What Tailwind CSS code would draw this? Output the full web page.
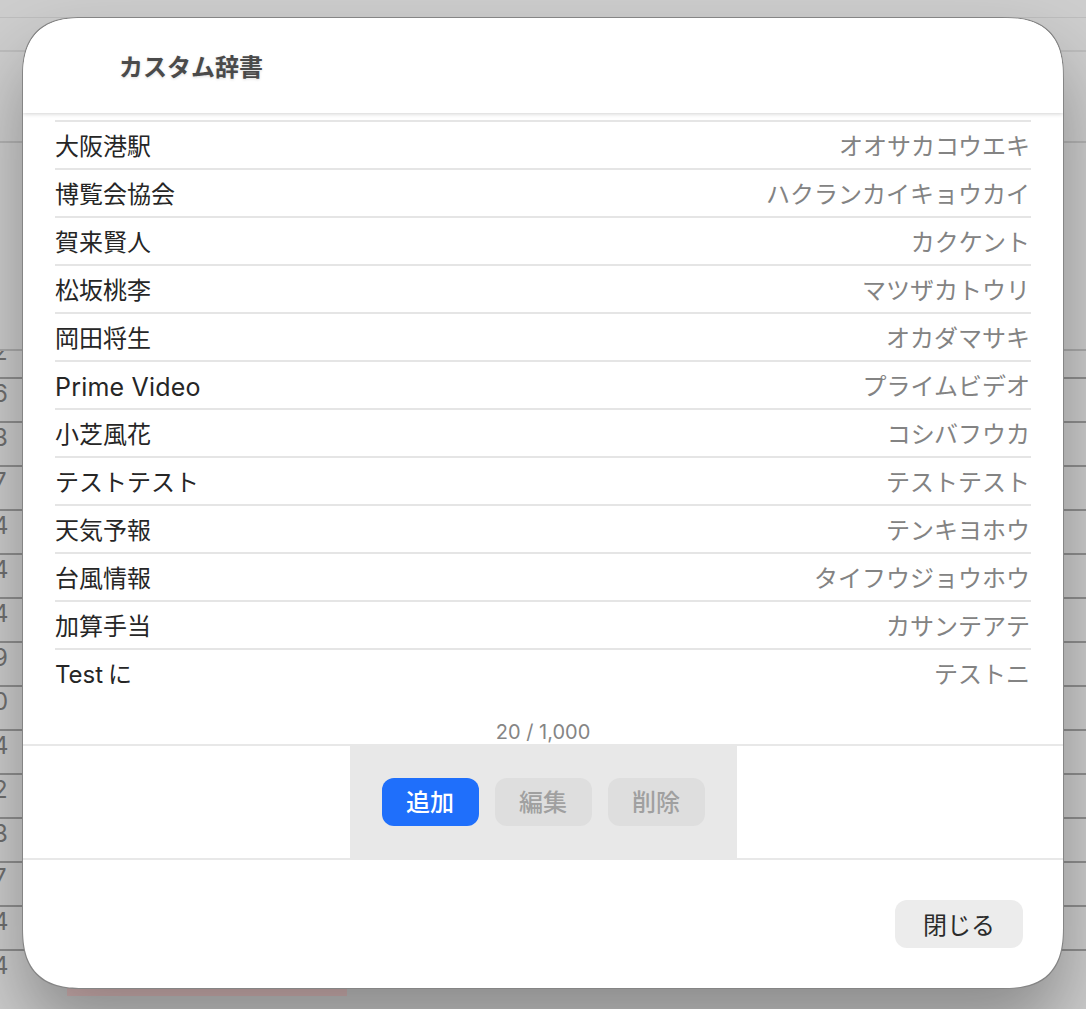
<!DOCTYPE html>
<html lang="ja">
<head>
  <meta charset="UTF-8" />
  <title>カスタム辞書</title>
  <script src="https://cdn.jsdelivr.net/npm/@tailwindcss/browser@4"></script>
</head>
<body class="relative w-[1086px] h-[1009px] overflow-hidden bg-[#cdcdcd] font-['Inter','Noto_Sans_CJK_JP',sans-serif]">
  <!-- page behind the dialog -->
  <div class="flex flex-col text-[24px] leading-[30px] text-[#707070]">
    <div class="h-[18px] border-b border-[#bdbdbd]"></div>
    <div class="h-[34px] border-b-2 border-[#bdbdbd]"></div>
    <div class="h-[91px] border-b-2 border-[#b4b4b4]"></div>
    <div class="h-[208px] border-b-2 border-[#ababab]"></div>
    <div class="h-[28px] border-b-2 border-[#8f8f8f] overflow-hidden"><div class="-ml-[7px] -mt-[14px]">2</div></div>
    <div class="h-[44px] border-b-2 border-[#8f8f8f] -ml-[7px]">6</div>
    <div class="h-[44px] border-b-2 border-[#8f8f8f] -ml-[7px]">8</div>
    <div class="h-[44px] border-b-2 border-[#8f8f8f] -ml-[7px]">7</div>
    <div class="h-[44px] border-b-2 border-[#8f8f8f] -ml-[7px]">4</div>
    <div class="h-[44px] border-b-2 border-[#8f8f8f] -ml-[7px]">4</div>
    <div class="h-[44px] border-b-2 border-[#8f8f8f] -ml-[7px]">4</div>
    <div class="h-[44px] border-b-2 border-[#8f8f8f] -ml-[7px]">9</div>
    <div class="h-[44px] border-b-2 border-[#8f8f8f] -ml-[7px]">0</div>
    <div class="h-[44px] border-b-2 border-[#8f8f8f] -ml-[7px]">4</div>
    <div class="h-[44px] border-b-2 border-[#8f8f8f] -ml-[7px]">2</div>
    <div class="h-[44px] border-b-2 border-[#8f8f8f] -ml-[7px]">8</div>
    <div class="h-[44px] border-b-2 border-[#8f8f8f] -ml-[7px]">7</div>
    <div class="h-[44px] border-b-2 border-[#8f8f8f] -ml-[7px]">4</div>
    <div class="h-[44px] -ml-[7px]">4</div>
  </div>
  <div class="absolute left-[67px] top-[960px] w-[280px] h-[36px] bg-[#dcbcbc]"></div>

  <!-- dialog -->
  <div class="absolute left-[23px] top-[18px] w-[1040px] h-[970px] flex flex-col bg-white rounded-[62px] [corner-shape:superellipse(1.4)] overflow-hidden shadow-[0_0_0_1px_#858585,0_40px_70px_rgba(0,0,0,0.32)]">
    <header class="relative z-10 h-[95px] shrink-0 flex items-center pl-[96px] pt-[4px] bg-white shadow-[0_1px_4px_rgba(0,0,0,0.18)]">
      <h1 class="text-[24px] font-bold text-[#4a4a4a] [text-shadow:0_1px_3px_rgba(0,0,0,0.14)]">カスタム辞書</h1>
    </header>

    <div class="px-[32px] pt-[7px] h-[631px] shrink-0 text-[24px] leading-[44px]">
      <ul class="border-t-2 border-[#e5e5e5]">
        <li class="h-[48px] pt-[3px] flex justify-between border-b-2 border-[#e5e5e5]"><span class="text-[#262626]">大阪港駅</span><span class="pr-px text-[#838383]">オオサカコウエキ</span></li>
        <li class="h-[48px] pt-[3px] flex justify-between border-b-2 border-[#e5e5e5]"><span class="text-[#262626]">博覧会協会</span><span class="pr-px text-[#838383]">ハクランカイキョウカイ</span></li>
        <li class="h-[48px] pt-[3px] flex justify-between border-b-2 border-[#e5e5e5]"><span class="text-[#262626]">賀来賢人</span><span class="pr-px text-[#838383]">カクケント</span></li>
        <li class="h-[48px] pt-[3px] flex justify-between border-b-2 border-[#e5e5e5]"><span class="text-[#262626]">松坂桃李</span><span class="pr-px text-[#838383]">マツザカトウリ</span></li>
        <li class="h-[48px] pt-[3px] flex justify-between border-b-2 border-[#e5e5e5]"><span class="text-[#262626]">岡田将生</span><span class="pr-px text-[#838383]">オカダマサキ</span></li>
        <li class="h-[48px] pt-[3px] flex justify-between border-b-2 border-[#e5e5e5]"><span class="text-[#262626] text-[25px] tracking-[0.2px]">Prime Video</span><span class="pr-px text-[#838383]">プライムビデオ</span></li>
        <li class="h-[48px] pt-[3px] flex justify-between border-b-2 border-[#e5e5e5]"><span class="text-[#262626]">小芝風花</span><span class="pr-px text-[#838383]">コシバフウカ</span></li>
        <li class="h-[48px] pt-[3px] flex justify-between border-b-2 border-[#e5e5e5]"><span class="text-[#262626]">テストテスト</span><span class="pr-px text-[#838383]">テストテスト</span></li>
        <li class="h-[48px] pt-[3px] flex justify-between border-b-2 border-[#e5e5e5]"><span class="text-[#262626]">天気予報</span><span class="pr-px text-[#838383]">テンキヨホウ</span></li>
        <li class="h-[48px] pt-[3px] flex justify-between border-b-2 border-[#e5e5e5]"><span class="text-[#262626]">台風情報</span><span class="pr-px text-[#838383]">タイフウジョウホウ</span></li>
        <li class="h-[48px] pt-[3px] flex justify-between border-b-2 border-[#e5e5e5]"><span class="text-[#262626]">加算手当</span><span class="pr-px text-[#838383]">カサンテアテ</span></li>
        <li class="h-[48px] pt-[3px] flex justify-between"><span class="text-[#262626] [word-spacing:-2px]">Test に</span><span class="pr-px text-[#838383]">テストニ</span></li>
      </ul>
      <p class="mt-[20px] text-center text-[20px] leading-[28px] text-[#858585]">20 / 1,000</p>
    </div>

    <div class="h-[116px] shrink-0 flex justify-center border-y-2 border-[#e8e8e8]">
      <div class="w-[387px] flex items-center justify-center gap-[16px] bg-[#e8e8e8] text-[24px]">
        <button class="w-[97px] h-[48px] pt-[2px] rounded-[12px] bg-[#1f6ffb] text-white font-medium">追加</button>
        <button class="w-[97px] h-[48px] pt-[2px] rounded-[12px] bg-[#dedede] text-[#a0a0a0] font-medium">編集</button>
        <button class="w-[97px] h-[48px] pt-[2px] rounded-[12px] bg-[#dedede] text-[#a0a0a0] font-medium">削除</button>
      </div>
    </div>

    <footer class="flex justify-end pt-[40px] pr-[40px]">
      <button class="w-[128px] h-[48px] pt-[3px] rounded-[12px] bg-[#ececec] text-[24px] text-[#2b2b2b]">閉じる</button>
    </footer>
  </div>
</body>
</html>
